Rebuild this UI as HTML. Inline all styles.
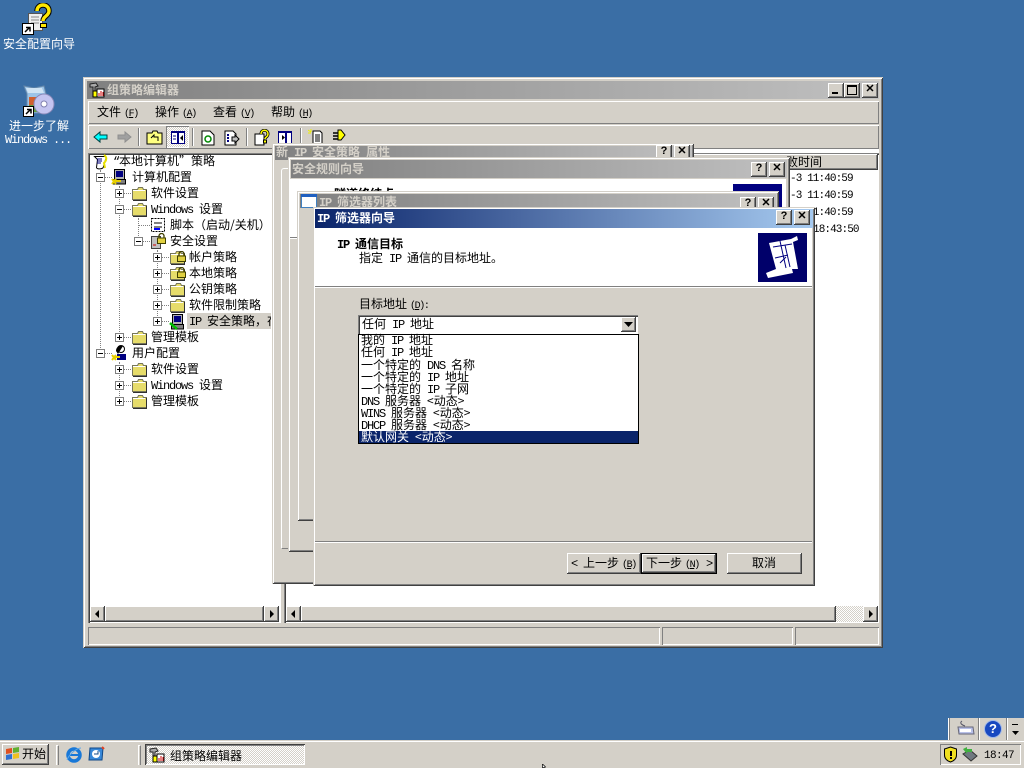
<!DOCTYPE html>
<html lang="zh"><head><meta charset="utf-8"><title>组策略编辑器</title>
<style>
html,body{margin:0;padding:0;width:1024px;height:768px;overflow:hidden;background:#3a6ea5}
div,span.a,svg.a{position:absolute;box-sizing:border-box}
.t{position:absolute;white-space:pre;font:12px/14px "WenQuanYi Zen Hei","Noto Sans CJK SC",sans-serif;color:#000}
b.l{font:normal 12px/14px "Liberation Mono",monospace;letter-spacing:-1.2px}
b.m{font:normal 10px/14px "Liberation Mono",monospace;letter-spacing:-1.4px;margin-left:3px}
.bd{font-weight:bold}
.bd b.l{font-weight:bold}
.win{background:#d4d0c8;box-shadow:inset 1px 1px #d4d0c8,inset -1px -1px #404040,inset 2px 2px #fff,inset -2px -2px #808080}
.btn{background:#d4d0c8;box-shadow:inset -1px -1px #404040,inset 1px 1px #fff,inset -2px -2px #808080}
.sunk{box-shadow:inset 1px 1px #808080,inset -1px -1px #fff}
.tb{height:15px;width:16px;background:#d4d0c8;box-shadow:inset -1px -1px #404040,inset 1px 1px #fff,inset -2px -2px #808080;text-align:center;font:bold 11px/13px "Liberation Sans",sans-serif;color:#000}
.ig{background:linear-gradient(90deg,#808080,#c0c0c0)}
.ex{width:9px;height:9px;background:#fff;border:1px solid #808080}
.ex:before{content:"";position:absolute;left:1px;top:3px;width:5px;height:1px;background:#000}
.ex.p:after{content:"";position:absolute;left:3px;top:1px;width:1px;height:5px;background:#000}
.v{border-left:1px dotted #808080;width:1px}
.h{border-top:1px dotted #808080;height:1px}
.d{background:repeating-conic-gradient(#fff 0 25%,#d4d0c8 0 50%) 0 0/2px 2px}
</style></head><body>
<svg width="0" height="0" style="position:absolute">
<defs>
<symbol id="f" viewBox="0 0 16 16"><path d="M1.500 4.500h5l1-2h4l1 2h3v10h-14z" fill="#e6dc6a" stroke="#77775a"/><path d="M2 3.500h4M2 5.500h12" stroke="#fff"/><path d="M15.500 5v10.500H2" fill="none" stroke="#303030"/></symbol>
<symbol id="lock" viewBox="0 0 9 11"><path d="M2 5V3a2.500 2.500 0 0 1 5 0v2" fill="none" stroke="#404000" stroke-width="1.300"/><rect x=".5" y="5" width="8" height="5.500" fill="#e0d040" stroke="#404000"/></symbol>
<symbol id="pc" viewBox="0 0 16 16"><path d="M3.500 .5h10v10h-10z" fill="#b0b0b0" stroke="#000"/><path d="M5 2h7v6H5z" fill="#000080"/><path d="M2.500 10.500h12v4.500h-12z" fill="#808080" stroke="#000"/></symbol>
</defs></svg>

<!-- desktop icons -->
<svg class="a" style="left:22px;top:3px" width="32" height="32" viewBox="0 0 32 32"><path d="M6.500 10.500h14v17h-14z" fill="#eee" stroke="#555"/><path d="M9 14h8M9 17h8M9 20h8" stroke="#888"/><path d="M15 8c0-8 12-8 12 0 0 5-6 5-6 10" fill="none" stroke="#000" stroke-width="5.400"/><path d="M15 8c0-8 12-8 12 0 0 5-6 5-6 10" fill="none" stroke="#ffe800" stroke-width="3.400"/><rect x="18.500" y="20.500" width="6" height="4" fill="#ffe800" stroke="#000"/><rect x=".5" y="20.500" width="11" height="11" fill="#fff" stroke="#000"/><path d="M3 29l4-4M4 24.500h4v4" stroke="#000" stroke-width="1.500" fill="none"/></svg>
<span class="t" style="left:3px;top:37px;color:#fff">安全配置向导</span>
<svg class="a" style="left:22px;top:84px" width="34" height="34" viewBox="0 0 34 34"><path d="M2 2l10 2 10-2 2 8-2 1v18H5V10z" fill="#9cc4e8" stroke="#68a"/><path d="M4 4h16l2 5H6z" fill="#d0e4f4"/><path d="M7 13h9v8H7z" fill="#d06030"/><path d="M7 21h9v7H7z" fill="#60a040"/><circle cx="22" cy="20" r="10" fill="#c4c4f0" stroke="#8888b8"/><circle cx="22" cy="20" r="3" fill="#fff" stroke="#8080b0"/><rect x="1.500" y="22.500" width="10" height="10" fill="#fff" stroke="#000"/><path d="M4 30l4-4M5 25.500h4v4" stroke="#000" stroke-width="1.500" fill="none"/></svg>
<span class="t" style="left:9px;top:119px;color:#fff">进一步了解</span>
<span class="t" style="left:5px;top:132px;color:#fff"><b class="l">Windows ...</b></span>

<!-- main window -->
<div class="win" style="left:83px;top:77px;width:800px;height:571px"></div>
<div class="ig" style="left:87px;top:81px;width:792px;height:18px"></div>
<svg class="a" style="left:89px;top:82px" width="16" height="16" viewBox="0 0 16 16"><path d="M1 2l6-1 2 3-3 1v6H4V5L1 5z" fill="#aaa" stroke="#222"/><rect x="4" y="9" width="4" height="6" fill="#ff0" stroke="#000"/><rect x="8" y="7" width="7" height="8" fill="#fff" stroke="#000"/><path d="M10 14v-3M12 14V9M14 14v-4" stroke="#c00"/></svg>
<span class="t bd" style="left:107px;top:83px;color:#d4d0c8">组策略编辑器</span>
<div class="tb" style="left:828px;top:83px"><span class="a" style="left:4px;top:9px;width:6px;height:2px;background:#000"></span></div>
<div class="tb" style="left:844px;top:83px"><span class="a" style="left:3px;top:2px;width:10px;height:10px;border:1px solid #000;border-top-width:2px"></span></div>
<div class="tb" style="left:862px;top:83px">✕</div>

<!-- menu -->
<div style="left:88px;top:101px;width:791px;height:23px;box-shadow:inset 1px 1px #fff,inset -1px -1px #808080"></div>
<span class="t" style="left:97px;top:105px">文件<b class="m">(<u>F</u>)</b></span>
<span class="t" style="left:155px;top:105px">操作<b class="m">(<u>A</u>)</b></span>
<span class="t" style="left:213px;top:105px">查看<b class="m">(<u>V</u>)</b></span>
<span class="t" style="left:271px;top:105px">帮助<b class="m">(<u>H</u>)</b></span>
<div style="left:88px;top:125px;width:791px;height:24px;box-shadow:inset 1px 1px #fff,inset -1px -1px #808080"></div>

<!-- toolbar -->
<svg class="a" style="left:93px;top:130px" width="16" height="14" viewBox="0 0 16 14"><path d="M1 7l6-5v3h7v4H7v3z" fill="#0ff" stroke="#004040"/></svg>
<svg class="a" style="left:116px;top:130px" width="16" height="14" viewBox="0 0 16 14"><path d="M15 7L9 2v3H2v4h7v3z" fill="#a0a0a0" stroke="#909090"/></svg>
<div style="left:138px;top:128px;width:2px;height:18px;border-left:1px solid #808080;border-right:1px solid #fff"></div>
<svg class="a" style="left:146px;top:130px" width="17" height="15" viewBox="0 0 17 15"><path d="M1 3h5l1-2h4l1 2h4v11H1z" fill="#ffff80" stroke="#000"/><path d="M5 8l3-3v2h4v4" fill="none" stroke="#000"/></svg>
<div class="d" style="left:166px;top:126px;width:23px;height:22px;box-shadow:inset 1px 1px #808080,inset -1px -1px #fff"></div>
<svg class="a" style="left:171px;top:131px" width="14" height="13" viewBox="0 0 14 13"><rect x=".5" y=".5" width="13" height="12" fill="#fff" stroke="#000080"/><path d="M0 0h14v2H0z" fill="#000080"/><path d="M7 0v13" stroke="#000080" stroke-width="2"/><path d="M2 5h3M2 8h3" stroke="#000080"/><path d="M12 4v6l-3-3z" fill="#000"/></svg>
<div style="left:192px;top:128px;width:2px;height:18px;border-left:1px solid #808080;border-right:1px solid #fff"></div>
<svg class="a" style="left:201px;top:130px" width="14" height="16" viewBox="0 0 14 16"><path d="M1 1h8l4 4v10H1z" fill="#fff" stroke="#000"/><circle cx="7" cy="9" r="3" fill="none" stroke="#080" stroke-width="1.500"/></svg>
<svg class="a" style="left:224px;top:130px" width="16" height="16" viewBox="0 0 16 16"><path d="M1 1h8l3 3v11H1z" fill="#fff" stroke="#000"/><path d="M3 5h2M3 8h2M3 11h2" stroke="#000080" stroke-width="2"/><path d="M8 7h3V5l4 4-4 4v-2H8z" fill="#c0c0c0" stroke="#000"/></svg>
<div style="left:246px;top:128px;width:2px;height:18px;border-left:1px solid #808080;border-right:1px solid #fff"></div>
<svg class="a" style="left:254px;top:129px" width="16" height="17" viewBox="0 0 16 17"><path d="M1 5h9v11H1z" fill="#fff" stroke="#000"/><path d="M7 5c0-5 7-5 7 0 0 3-3 3-3 5" fill="none" stroke="#000" stroke-width="3"/><path d="M7 5c0-5 7-5 7 0 0 3-3 3-3 5" fill="none" stroke="#ff0" stroke-width="1.500"/><rect x="9.500" y="11" width="3" height="3" fill="#ff0" stroke="#000"/></svg>
<svg class="a" style="left:278px;top:131px" width="14" height="13" viewBox="0 0 14 13"><rect x=".5" y=".5" width="13" height="12" fill="#fff" stroke="#000080"/><path d="M0 0h14v2H0z" fill="#000080"/><path d="M8 0v13" stroke="#000080" stroke-width="2"/><path d="M4 4v5l3-2.500z" fill="#000"/></svg>
<div style="left:300px;top:128px;width:2px;height:18px;border-left:1px solid #808080;border-right:1px solid #fff"></div>
<svg class="a" style="left:308px;top:129px" width="16" height="16" viewBox="0 0 16 16"><path d="M5 2h7l2 2v11H5z" fill="#fff" stroke="#000"/><path d="M7 6h5M7 8h5M7 10h5M7 12h5" stroke="#000"/><path d="M0 1l3 2M3 0v3M0 4h3" stroke="#ee0"/></svg>
<svg class="a" style="left:331px;top:129px" width="16" height="16" viewBox="0 0 16 16"><path d="M2 4h9M2 7h9M2 10h9" stroke="#000" stroke-width="1.500"/><path d="M7 1h3l4 5-4 5H7z" fill="#ff0" stroke="#000"/></svg>

<!-- panes -->
<div style="left:88px;top:153px;width:193px;height:470px;background:#fff;box-shadow:inset 1px 1px #808080,inset 2px 2px #404040,inset -1px -1px #fff"></div>
<div style="left:284px;top:153px;width:595px;height:470px;background:#fff;box-shadow:inset 1px 1px #808080,inset 2px 2px #404040,inset -1px -1px #fff"></div>
<div class="btn" style="left:286px;top:154px;width:592px;height:16px"></div>
<span class="t" style="left:786px;top:155px">败时间</span>
<span class="t" style="left:790px;top:172px;font:11px/14px 'Liberation Mono',monospace;letter-spacing:-.9px">-3 11:40:59</span>
<span class="t" style="left:790px;top:189px;font:11px/14px 'Liberation Mono',monospace;letter-spacing:-.9px">-3 11:40:59</span>
<span class="t" style="left:790px;top:206px;font:11px/14px 'Liberation Mono',monospace;letter-spacing:-.9px">-3 11:40:59</span>
<span class="t" style="left:813px;top:223px;font:11px/14px 'Liberation Mono',monospace;letter-spacing:-.9px">18:43:50</span>

<!-- tree lines -->
<div class="v" style="left:100px;top:170px;height:184px"></div>
<div class="v" style="left:119px;top:186px;height:152px"></div>
<div class="v" style="left:119px;top:362px;height:40px"></div>
<div class="v" style="left:138px;top:218px;height:24px"></div>
<div class="v" style="left:157px;top:250px;height:72px"></div>
<div class="h" style="left:104px;top:177px;width:8px"></div>
<div class="h" style="left:123px;top:193px;width:8px"></div>
<div class="h" style="left:123px;top:209px;width:8px"></div>
<div class="h" style="left:139px;top:225px;width:11px"></div>
<div class="h" style="left:142px;top:241px;width:8px"></div>
<div class="h" style="left:161px;top:257px;width:8px"></div>
<div class="h" style="left:161px;top:273px;width:8px"></div>
<div class="h" style="left:161px;top:289px;width:8px"></div>
<div class="h" style="left:161px;top:305px;width:8px"></div>
<div class="h" style="left:161px;top:321px;width:8px"></div>
<div class="h" style="left:123px;top:337px;width:8px"></div>
<div class="h" style="left:104px;top:353px;width:8px"></div>
<div class="h" style="left:123px;top:369px;width:8px"></div>
<div class="h" style="left:123px;top:385px;width:8px"></div>
<div class="h" style="left:123px;top:401px;width:8px"></div>

<!-- tree -->
<svg class="a" style="left:93px;top:154px" width="16" height="16" viewBox="0 0 16 16"><path d="M1.500 2.500h10c2 0 2 2 1 3l-2 7c0 3-7 3-7 1l1-8z" fill="#fff" stroke="#000"/><path d="M4 5h5M4 7h5M4 9h4" stroke="#000080"/><path d="M11 1c3 2 3 5 0 8l1 5" stroke="#e8e000" stroke-width="2" fill="none"/></svg>
<span class="t" style="left:113px;top:154px"><b class="l">“</b>本地计算机”策略</span>

<div class="ex" style="left:96px;top:173px"></div>
<svg class="a" style="left:111px;top:169px" width="16" height="16"><use href="#pc"/><path d="M1 10l4 5M5 10l-4 5M4 12h6" stroke="#e8d000" stroke-width="2"/></svg>
<span class="t" style="left:132px;top:170px">计算机配置</span>

<div class="ex p" style="left:115px;top:189px"></div>
<svg class="a" style="left:131px;top:185px" width="16" height="16"><use href="#f"/></svg>
<span class="t" style="left:151px;top:186px">软件设置</span>

<div class="ex" style="left:115px;top:205px"></div>
<svg class="a" style="left:131px;top:201px" width="16" height="16"><use href="#f"/></svg>
<span class="t" style="left:151px;top:202px"><b class="l">Windows </b>设置</span>

<svg class="a" style="left:150px;top:217px" width="16" height="16" viewBox="0 0 16 16"><path d="M1.500 1.500h13v13h-13z" fill="#fff" stroke="#000" stroke-dasharray="2 1"/><path d="M4 6h8M4 10h8" stroke="#000"/><path d="M4 12h6" stroke="#00f" stroke-width="2"/></svg>
<span class="t" style="left:170px;top:218px">脚本（启动/关机）</span>

<div class="ex" style="left:134px;top:237px"></div>
<svg class="a" style="left:150px;top:233px" width="16" height="16" viewBox="0 0 16 16"><path d="M1.500 3.500h9v12h-9z" fill="#c0c0c0" stroke="#404040"/><path d="M3 12h3" stroke="#c00"/></svg>
<svg class="a" style="left:157px;top:233px" width="9" height="11"><use href="#lock"/></svg>
<span class="t" style="left:170px;top:234px">安全设置</span>

<div class="ex p" style="left:153px;top:253px"></div>
<svg class="a" style="left:169px;top:249px" width="16" height="16"><use href="#f"/></svg>
<svg class="a" style="left:177px;top:251px" width="9" height="11"><use href="#lock"/></svg>
<span class="t" style="left:189px;top:250px">帐户策略</span>

<div class="ex p" style="left:153px;top:269px"></div>
<svg class="a" style="left:169px;top:265px" width="16" height="16"><use href="#f"/></svg>
<svg class="a" style="left:177px;top:267px" width="9" height="11"><use href="#lock"/></svg>
<span class="t" style="left:189px;top:266px">本地策略</span>

<div class="ex p" style="left:153px;top:285px"></div>
<svg class="a" style="left:169px;top:281px" width="16" height="16"><use href="#f"/></svg>
<span class="t" style="left:189px;top:282px">公钥策略</span>

<div class="ex p" style="left:153px;top:301px"></div>
<svg class="a" style="left:169px;top:297px" width="16" height="16"><use href="#f"/></svg>
<span class="t" style="left:189px;top:298px">软件限制策略</span>

<div class="ex p" style="left:153px;top:317px"></div>
<svg class="a" style="left:169px;top:314px" width="16" height="16"><use href="#pc"/><path d="M1 9l7 6" stroke="#00c000" stroke-width="2.500"/></svg>
<div style="left:187px;top:313px;width:84px;height:16px;background:#d4d0c8;overflow:hidden"><span class="t" style="left:2px;top:1px"><b class="l">IP </b>安全策略，在</span></div>

<div class="ex p" style="left:115px;top:333px"></div>
<svg class="a" style="left:131px;top:329px" width="16" height="16"><use href="#f"/></svg>
<span class="t" style="left:151px;top:330px">管理模板</span>

<div class="ex" style="left:96px;top:349px"></div>
<svg class="a" style="left:111px;top:345px" width="16" height="16" viewBox="0 0 16 16"><circle cx="10" cy="4" r="3.500" fill="#fff" stroke="#000"/><path d="M5 6c0-5 5-6 7-5L7 9z" fill="#000"/><path d="M6 9h9v6H6z" fill="#000080"/><path d="M1 10l4 5M5 10l-4 5M4 12h5" stroke="#e8d000" stroke-width="2"/></svg>
<span class="t" style="left:132px;top:346px">用户配置</span>

<div class="ex p" style="left:115px;top:365px"></div>
<svg class="a" style="left:131px;top:361px" width="16" height="16"><use href="#f"/></svg>
<span class="t" style="left:151px;top:362px">软件设置</span>

<div class="ex p" style="left:115px;top:381px"></div>
<svg class="a" style="left:131px;top:377px" width="16" height="16"><use href="#f"/></svg>
<span class="t" style="left:151px;top:378px"><b class="l">Windows </b>设置</span>

<div class="ex p" style="left:115px;top:397px"></div>
<svg class="a" style="left:131px;top:393px" width="16" height="16"><use href="#f"/></svg>
<span class="t" style="left:151px;top:394px">管理模板</span>

<!-- scrollbars -->
<div class="d" style="left:90px;top:606px;width:189px;height:16px"></div>
<div class="btn" style="left:90px;top:606px;width:15px;height:16px"></div>
<div class="btn" style="left:105px;top:606px;width:159px;height:16px"></div>
<div class="btn" style="left:264px;top:606px;width:15px;height:16px"></div>
<svg class="a" style="left:94px;top:610px" width="6" height="8"><path d="M5 0v8L1 4z"/></svg>
<svg class="a" style="left:269px;top:610px" width="6" height="8"><path d="M1 0v8l4-4z"/></svg>
<div class="d" style="left:286px;top:606px;width:592px;height:16px"></div>
<div class="btn" style="left:286px;top:606px;width:15px;height:16px"></div>
<div class="btn" style="left:301px;top:606px;width:535px;height:16px"></div>
<div class="btn" style="left:863px;top:606px;width:15px;height:16px"></div>
<svg class="a" style="left:290px;top:610px" width="6" height="8"><path d="M5 0v8L1 4z"/></svg>
<svg class="a" style="left:868px;top:610px" width="6" height="8"><path d="M1 0v8l4-4z"/></svg>

<!-- status bar -->
<div class="sunk" style="left:88px;top:627px;width:572px;height:18px"></div>
<div class="sunk" style="left:662px;top:627px;width:131px;height:18px"></div>
<div class="sunk" style="left:795px;top:627px;width:84px;height:18px"></div>

<!-- dialog 1 -->
<div class="win" style="left:272px;top:143px;width:422px;height:441px"></div>
<div class="ig" style="left:275px;top:146px;width:417px;height:14px"></div>
<span class="t bd" style="left:276px;top:145px;color:#d4d0c8">新<b class="l"> IP </b>安全策略<b class="l"> </b>属性</span>
<div class="tb" style="left:656px;top:145px">?</div>
<div class="tb" style="left:674px;top:145px">✕</div>
<div style="left:694px;top:148px;width:185px;height:6px;border-top:1px solid #808080;border-bottom:1px solid #808080;background:#fff"></div>
<div style="left:281px;top:168px;width:8px;height:381px;border-left:1px solid #fff;border-top:1px solid #fff;border-bottom:1px solid #808080;border-top-left-radius:3px"></div>

<!-- dialog 2 -->
<div class="win" style="left:288px;top:157px;width:502px;height:395px"></div>
<div class="ig" style="left:291px;top:160px;width:496px;height:18px"></div>
<span class="t bd" style="left:292px;top:162px;color:#d4d0c8">安全规则向导</span>
<div class="tb" style="left:751px;top:162px">?</div>
<div class="tb" style="left:769px;top:162px">✕</div>
<div style="left:290px;top:179px;width:496px;height:58px;background:#fff"></div>
<div style="left:290px;top:237px;width:496px;height:2px;border-top:1px solid #808080;border-bottom:1px solid #fff"></div>
<span class="t bd" style="left:334px;top:187px">隧道终结点</span>
<div style="left:733px;top:184px;width:49px;height:30px;background:#000080"></div>

<!-- dialog 3 -->
<div class="win" style="left:297px;top:191px;width:482px;height:330px"></div>
<div class="ig" style="left:300px;top:194px;width:476px;height:14px"></div>
<svg class="a" style="left:301px;top:194px" width="16" height="14" viewBox="0 0 16 14"><rect x=".5" y=".5" width="15" height="13" fill="#fff" stroke="#4080c0"/><path d="M0 0h16v3H0z" fill="#2060c0"/></svg>
<span class="t bd" style="left:319px;top:195px;color:#d4d0c8"><b class="l">IP </b>筛选器列表</span>
<div class="tb" style="left:740px;top:197px">?</div>
<div class="tb" style="left:758px;top:197px">✕</div>

<!-- dialog 4 -->
<div class="win" style="left:313px;top:207px;width:502px;height:379px"></div>
<div style="left:315px;top:209px;width:498px;height:19px;background:linear-gradient(90deg,#0a246a,#a6caf0)"></div>
<span class="t bd" style="left:317px;top:211px;color:#fff"><b class="l">IP </b>筛选器向导</span>
<div class="tb" style="left:776px;top:210px">?</div>
<div class="tb" style="left:794px;top:210px">✕</div>
<div style="left:315px;top:228px;width:497px;height:58px;background:#fff"></div>
<div style="left:315px;top:286px;width:497px;height:2px;border-top:1px solid #808080;border-bottom:1px solid #fff"></div>
<span class="t bd" style="left:337px;top:237px"><b class="l">IP </b>通信目标</span>
<span class="t" style="left:359px;top:251px">指定<b class="l"> IP </b>通信的目标地址。</span>
<svg class="a" style="left:758px;top:233px" width="49" height="49" viewBox="0 0 49 49"><rect width="49" height="49" fill="#00006a"/><path d="M11 10L33 6 39 3 40 7 35 9 40 36 34 36 35 40 10 45 8 40 18 36z" fill="#fff"/><path d="M15 14l19-3M22 8l6 27M17 25l13-3M22 30l6-6M27 12l5 22" stroke="#000080" fill="none"/></svg>

<span class="t" style="left:359px;top:297px">目标地址<b class="m">(<u>D</u>):</b></span>
<div style="left:358px;top:315px;width:280px;height:19px;background:#fff;box-shadow:inset 1px 1px #808080,inset 2px 2px #404040,inset -1px -1px #fff"></div>
<span class="t" style="left:362px;top:317px">任何<b class="l"> IP </b>地址</span>
<div class="btn" style="left:621px;top:317px;width:15px;height:15px"></div>
<svg class="a" style="left:624px;top:322px" width="9" height="5"><path d="M0 0h9L4.500 5z"/></svg>
<div style="left:358px;top:334px;width:281px;height:110px;background:#fff;border:1px solid #000"></div>
<div style="left:359px;top:431px;width:279px;height:12px;background:#0a246a"></div>
<span class="t" style="left:361px;top:333px">我的<b class="l"> IP </b>地址</span>
<span class="t" style="left:361px;top:345px">任何<b class="l"> IP </b>地址</span>
<span class="t" style="left:361px;top:358px">一个特定的<b class="l"> DNS </b>名称</span>
<span class="t" style="left:361px;top:370px">一个特定的<b class="l"> IP </b>地址</span>
<span class="t" style="left:361px;top:382px">一个特定的<b class="l"> IP </b>子网</span>
<span class="t" style="left:361px;top:394px"><b class="l">DNS </b>服务器<b class="l"> </b>&lt;动态&gt;</span>
<span class="t" style="left:361px;top:406px"><b class="l">WINS </b>服务器<b class="l"> </b>&lt;动态&gt;</span>
<span class="t" style="left:361px;top:418px"><b class="l">DHCP </b>服务器<b class="l"> </b>&lt;动态&gt;</span>
<span class="t" style="left:361px;top:430px;color:#fff">默认网关<b class="l"> </b>&lt;动态&gt;</span>

<div style="left:315px;top:541px;width:497px;height:2px;border-top:1px solid #808080;border-bottom:1px solid #fff"></div>
<div class="btn" style="left:567px;top:553px;width:74px;height:21px"></div>
<span class="t" style="left:571px;top:556px"><b class="l">&lt; </b>上一步<b class="m">(<u>B</u>)</b></span>
<div class="btn" style="left:641px;top:553px;width:76px;height:21px;border:1px solid #000"></div>
<span class="t" style="left:646px;top:556px">下一步<b class="m">(<u>N</u>)</b></span>
<span class="t" style="left:706px;top:556px"><b class="l">&gt;</b></span>
<div class="btn" style="left:727px;top:553px;width:75px;height:21px"></div>
<span class="t" style="left:752px;top:556px">取消</span>

<!-- language bar -->
<div style="left:948px;top:718px;width:76px;height:22px;background:#d4d0c8"></div>
<div style="left:948px;top:718px;width:2px;height:22px;border-left:1px solid #fff;border-right:1px solid #808080"></div>
<svg class="a" style="left:957px;top:720px" width="18" height="17" viewBox="0 0 18 17"><path d="M5 1c-3 2 0 4 3 5" fill="none" stroke="#556"/><path d="M1 7h15l1 7H2z" fill="#b8c0e8" stroke="#667"/><path d="M3 9h11v3H3z" fill="#fff"/></svg>
<div style="left:978px;top:718px;width:2px;height:22px;border-left:1px solid #808080;border-right:1px solid #fff"></div>
<div style="left:984px;top:720px;width:18px;height:18px;border-radius:50%;background:#1848c0;border:1px solid #a0b8e8;color:#fff;text-align:center;font:bold 13px/16px 'Liberation Sans',sans-serif">?</div>
<div style="left:1006px;top:718px;width:2px;height:22px;border-left:1px solid #808080;border-right:1px solid #fff"></div>
<div style="left:1012px;top:724px;width:6px;height:1px;background:#000"></div>
<svg class="a" style="left:1012px;top:731px" width="7" height="4"><path d="M0 0h7L3.500 4z"/></svg>

<!-- taskbar -->
<div style="left:0;top:740px;width:1024px;height:28px;background:#d4d0c8;border-top:1px solid #d4d0c8;box-shadow:inset 0 1px #fff"></div>
<div class="btn" style="left:2px;top:744px;width:47px;height:21px"></div>
<svg class="a" style="left:5px;top:746px" width="16" height="16" viewBox="0 0 16 16"><path d="M1 3l6-1v5l-6 1z" fill="#e05020"/><path d="M8 2l6-1v5l-6 1z" fill="#60b030"/><path d="M1 9l6-1v5l-6 1z" fill="#3070d0"/><path d="M8 8l6-1v5l-6 1z" fill="#f0c020"/></svg>
<span class="t" style="left:22px;top:747px">开始</span>
<div style="left:56px;top:745px;width:3px;height:20px;border-left:1px solid #fff;border-right:1px solid #808080;border-top:1px solid #fff;background:#d4d0c8"></div>
<svg class="a" style="left:65px;top:746px" width="18" height="17" viewBox="0 0 18 17"><circle cx="9" cy="9" r="6" fill="none" stroke="#1878d8" stroke-width="3.500"/><path d="M4 9h11" stroke="#1878d8" stroke-width="2"/><path d="M2 14C4 8 12 2 16 2" fill="none" stroke="#60a8e8"/></svg>
<svg class="a" style="left:88px;top:745px" width="18" height="18" viewBox="0 0 18 18"><path d="M2 3h13l-1 12H1z" fill="#3888d8" stroke="#104888"/><circle cx="8" cy="9" r="4" fill="#fff"/><path d="M6 9h4v-3" stroke="#104888" fill="none"/><path d="M14 2l2 2" stroke="#e04020" stroke-width="2"/></svg>
<div style="left:138px;top:745px;width:3px;height:20px;border-left:1px solid #fff;border-right:1px solid #808080;border-top:1px solid #fff"></div>
<div class="d" style="left:145px;top:744px;width:160px;height:21px;box-shadow:inset 1px 1px #404040,inset -1px -1px #fff,inset 2px 2px #808080"></div>
<svg class="a" style="left:149px;top:747px" width="16" height="16" viewBox="0 0 16 16"><path d="M1 2l6-1 2 3-3 1v6H4V5L1 5z" fill="#aaa" stroke="#222"/><rect x="4" y="9" width="4" height="6" fill="#ff0" stroke="#000"/><rect x="8" y="7" width="7" height="8" fill="#fff" stroke="#000"/><path d="M10 14v-3M12 14V9M14 14v-4" stroke="#c00"/></svg>
<span class="t" style="left:170px;top:749px">组策略编辑器</span>
<div class="sunk" style="left:940px;top:744px;width:81px;height:21px"></div>
<svg class="a" style="left:943px;top:746px" width="15" height="17" viewBox="0 0 15 17"><path d="M7.500 1l6 2v6c0 4-3 6-6 7-3-1-6-3-6-7V3z" fill="#f0e020" stroke="#000"/><path d="M7 5h2v5H7zM7 11h2v2H7z" fill="#000"/></svg>
<svg class="a" style="left:962px;top:746px" width="16" height="16" viewBox="0 0 16 16"><path d="M1 8l8 7 6-5-7-6z" fill="#707880" stroke="#333"/><path d="M1 3l4-2v2h5v3H5v2z" fill="#40b040"/></svg>
<span class="t" style="left:984px;top:749px;font:11px/14px 'Liberation Mono',monospace;letter-spacing:-.6px">18:47</span>
<svg class="a" style="left:542px;top:764px" width="6" height="4"><path d="M0.500 0v4l3-1z" fill="#fff" stroke="#000" stroke-width=".7"/></svg>
</body></html>
